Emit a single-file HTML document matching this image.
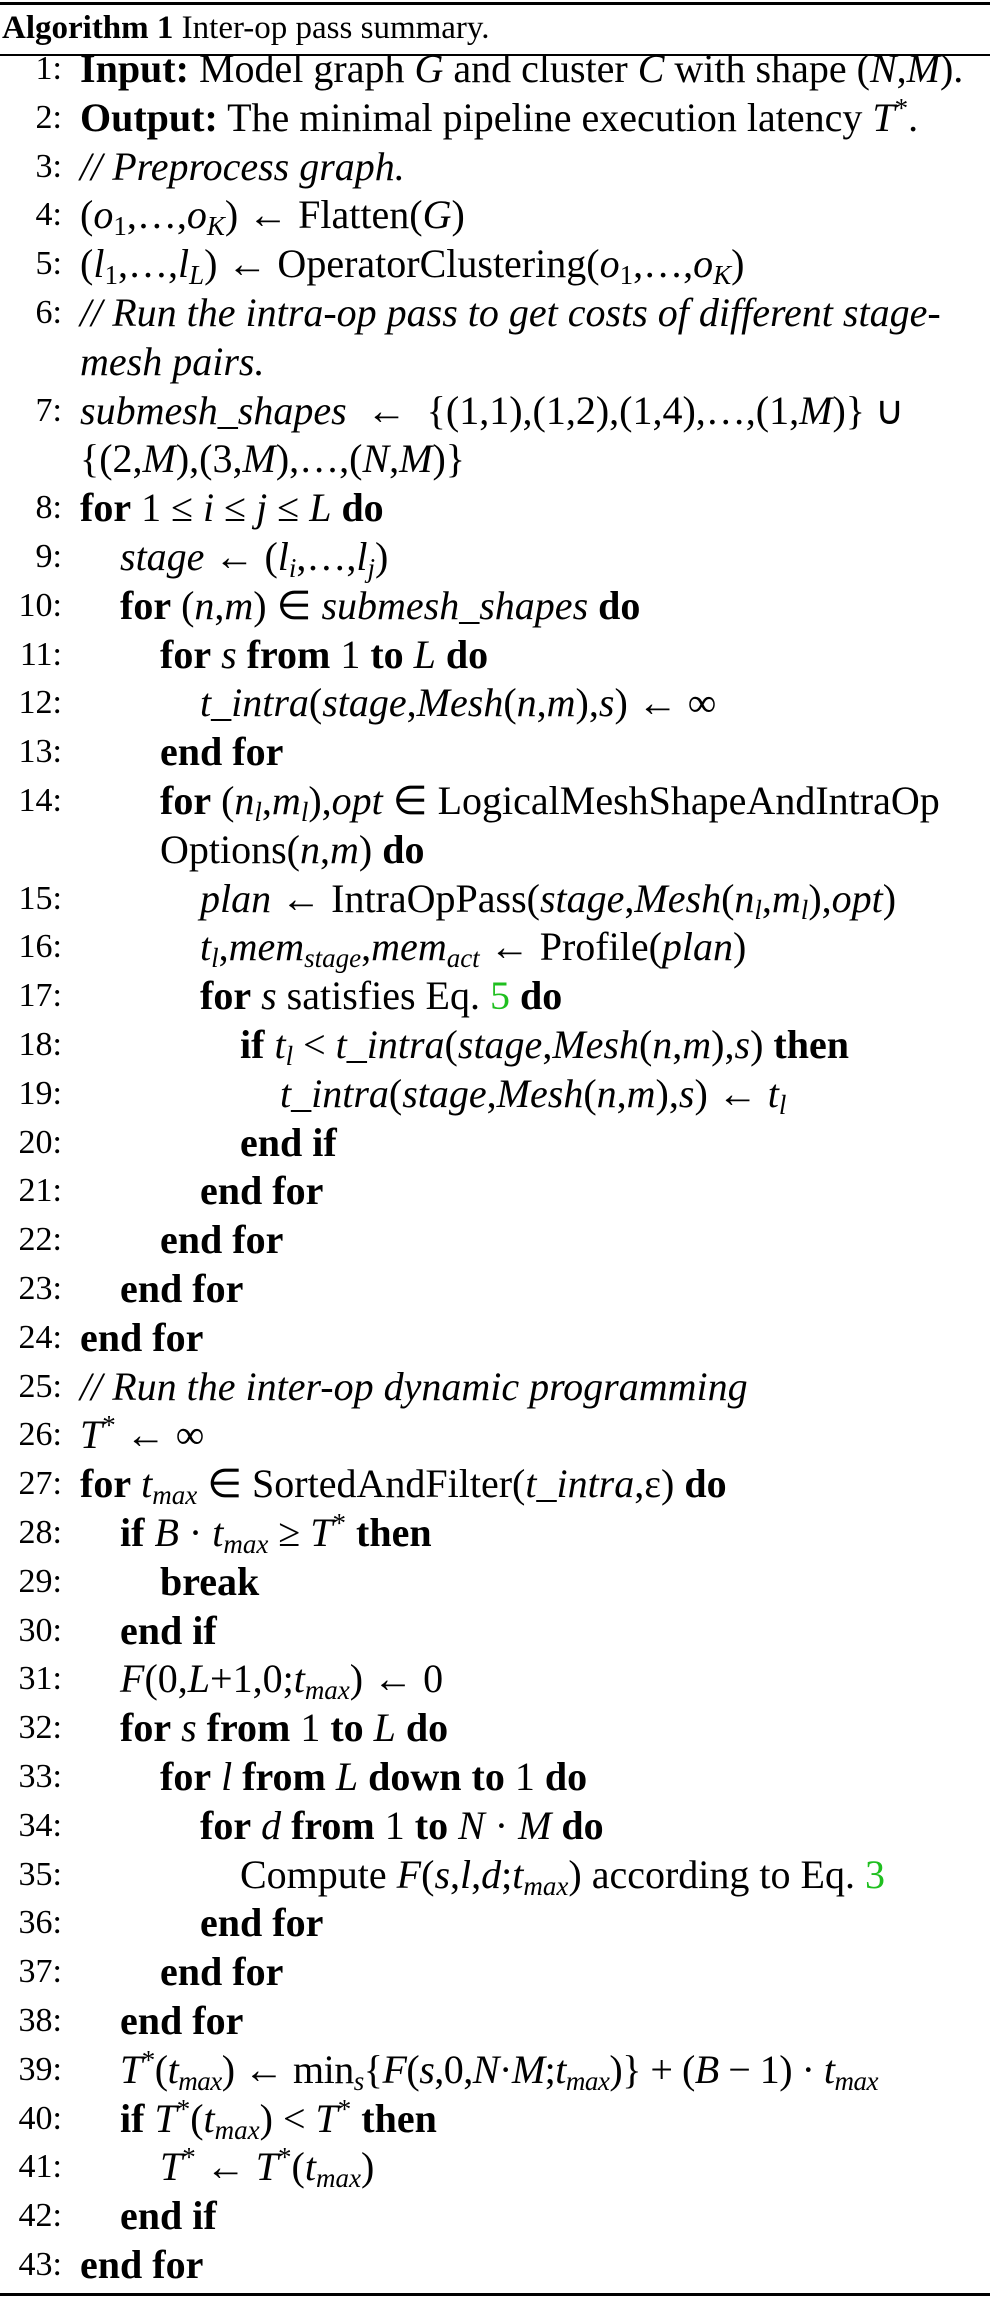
<!DOCTYPE html>
<html><head><meta charset="utf-8"><style>
html,body{margin:0;padding:0;background:#fff;}
body{width:990px;height:2312px;position:relative;overflow:hidden;font-family:"Liberation Serif",serif;color:#000;}
.rule{position:absolute;left:0;width:990px;background:#000;}
.title{position:absolute;left:2px;top:6px;font-size:33px;line-height:44px;}
.row{position:absolute;left:0;width:990px;height:49px;line-height:49px;font-size:40px;white-space:nowrap;}
.n{position:absolute;left:0;top:0;width:62px;text-align:right;font-size:34px;}
.t{position:absolute;top:0;}
.l0{left:80px}.l1{left:120px}.l2{left:160px}.l3{left:200px}.l4{left:240px}.l5{left:280px}
b{font-weight:bold}
i{font-style:italic}
sub{font-size:27px;vertical-align:-7px;line-height:0}
sup{font-size:27px;vertical-align:14px;line-height:0}
.g{color:#1fbf1f}
</style></head><body>
<div class="rule" style="top:2px;height:3px"></div>
<div class="title"><b>Algorithm 1</b> Inter-op pass summary.</div>
<div class="rule" style="top:54px;height:2px"></div>

<div class="row" style="top:44px"><span class="n">1:</span><span class="t l0"><b>Input:</b> Model graph <i>G</i> and cluster <i>C</i> with shape (<i>N</i>,<i>M</i>).</span></div>
<div class="row" style="top:92.8px"><span class="n">2:</span><span class="t l0"><b>Output:</b> The minimal pipeline execution latency <i>T</i><sup>*</sup>.</span></div>
<div class="row" style="top:141.6px"><span class="n">3:</span><span class="t l0"><i>// Preprocess graph.</i></span></div>
<div class="row" style="top:190.4px"><span class="n">4:</span><span class="t l0">(<i>o</i><sub>1</sub>,&hellip;,<i>o<sub>K</sub></i>) &larr; Flatten(<i>G</i>)</span></div>
<div class="row" style="top:239.2px"><span class="n">5:</span><span class="t l0">(<i>l</i><sub>1</sub>,&hellip;,<i>l<sub>L</sub></i>) &larr; OperatorClustering(<i>o</i><sub>1</sub>,&hellip;,<i>o<sub>K</sub></i>)</span></div>
<div class="row" style="top:288px"><span class="n">6:</span><span class="t l0"><i>// Run the intra-op pass to get costs of different stage-</i></span></div>
<div class="row" style="top:336.8px"><span class="t l0"><i>mesh pairs.</i></span></div>
<div class="row" style="top:385.6px"><span class="n">7:</span><span class="t l0"><i>submesh_shapes</i> &nbsp;&larr;&nbsp; {(1,1),(1,2),(1,4),&hellip;,(1,<i>M</i>)} &cup;</span></div>
<div class="row" style="top:434.4px"><span class="t l0">{(2,<i>M</i>),(3,<i>M</i>),&hellip;,(<i>N</i>,<i>M</i>)}</span></div>
<div class="row" style="top:483.2px"><span class="n">8:</span><span class="t l0"><b>for</b> 1 &le; <i>i</i> &le; <i>j</i> &le; <i>L</i> <b>do</b></span></div>
<div class="row" style="top:532px"><span class="n">9:</span><span class="t l1"><i>stage</i> &larr; (<i>l<sub>i</sub></i>,&hellip;,<i>l<sub>j</sub></i>)</span></div>
<div class="row" style="top:580.8px"><span class="n">10:</span><span class="t l1"><b>for</b> (<i>n</i>,<i>m</i>) &isin; <i>submesh_shapes</i> <b>do</b></span></div>
<div class="row" style="top:629.6px"><span class="n">11:</span><span class="t l2"><b>for</b> <i>s</i> <b>from</b> 1 <b>to</b> <i>L</i> <b>do</b></span></div>
<div class="row" style="top:678.4px"><span class="n">12:</span><span class="t l3"><i>t_intra</i>(<i>stage</i>,<i>Mesh</i>(<i>n</i>,<i>m</i>),<i>s</i>) &larr; &infin;</span></div>
<div class="row" style="top:727.2px"><span class="n">13:</span><span class="t l2"><b>end for</b></span></div>
<div class="row" style="top:776px"><span class="n">14:</span><span class="t l2"><b>for</b> (<i>n<sub>l</sub></i>,<i>m<sub>l</sub></i>),<i>opt</i> &isin; LogicalMeshShapeAndIntraOp</span></div>
<div class="row" style="top:824.8px"><span class="t l2">Options(<i>n</i>,<i>m</i>) <b>do</b></span></div>
<div class="row" style="top:873.6px"><span class="n">15:</span><span class="t l3"><i>plan</i> &larr; IntraOpPass(<i>stage</i>,<i>Mesh</i>(<i>n<sub>l</sub></i>,<i>m<sub>l</sub></i>),<i>opt</i>)</span></div>
<div class="row" style="top:922.4px"><span class="n">16:</span><span class="t l3"><i>t<sub>l</sub></i>,<i>mem<sub>stage</sub></i>,<i>mem<sub>act</sub></i> &larr; Profile(<i>plan</i>)</span></div>
<div class="row" style="top:971.2px"><span class="n">17:</span><span class="t l3"><b>for</b> <i>s</i> satisfies Eq. <span class="g">5</span> <b>do</b></span></div>
<div class="row" style="top:1020px"><span class="n">18:</span><span class="t l4"><b>if</b> <i>t<sub>l</sub></i> &lt; <i>t_intra</i>(<i>stage</i>,<i>Mesh</i>(<i>n</i>,<i>m</i>),<i>s</i>) <b>then</b></span></div>
<div class="row" style="top:1068.8px"><span class="n">19:</span><span class="t l5"><i>t_intra</i>(<i>stage</i>,<i>Mesh</i>(<i>n</i>,<i>m</i>),<i>s</i>) &larr; <i>t<sub>l</sub></i></span></div>
<div class="row" style="top:1117.6px"><span class="n">20:</span><span class="t l4"><b>end if</b></span></div>
<div class="row" style="top:1166.4px"><span class="n">21:</span><span class="t l3"><b>end for</b></span></div>
<div class="row" style="top:1215.2px"><span class="n">22:</span><span class="t l2"><b>end for</b></span></div>
<div class="row" style="top:1264px"><span class="n">23:</span><span class="t l1"><b>end for</b></span></div>
<div class="row" style="top:1312.8px"><span class="n">24:</span><span class="t l0"><b>end for</b></span></div>
<div class="row" style="top:1361.6px"><span class="n">25:</span><span class="t l0"><i>// Run the inter-op dynamic programming</i></span></div>
<div class="row" style="top:1410.4px"><span class="n">26:</span><span class="t l0"><i>T</i><sup>*</sup> &larr; &infin;</span></div>
<div class="row" style="top:1459.2px"><span class="n">27:</span><span class="t l0"><b>for</b> <i>t<sub>max</sub></i> &isin; SortedAndFilter(<i>t_intra</i>,&epsilon;) <b>do</b></span></div>
<div class="row" style="top:1508px"><span class="n">28:</span><span class="t l1"><b>if</b> <i>B</i> &middot; <i>t<sub>max</sub></i> &ge; <i>T</i><sup>*</sup> <b>then</b></span></div>
<div class="row" style="top:1556.8px"><span class="n">29:</span><span class="t l2"><b>break</b></span></div>
<div class="row" style="top:1605.6px"><span class="n">30:</span><span class="t l1"><b>end if</b></span></div>
<div class="row" style="top:1654.4px"><span class="n">31:</span><span class="t l1"><i>F</i>(0,<i>L</i>+1,0;<i>t<sub>max</sub></i>) &larr; 0</span></div>
<div class="row" style="top:1703.2px"><span class="n">32:</span><span class="t l1"><b>for</b> <i>s</i> <b>from</b> 1 <b>to</b> <i>L</i> <b>do</b></span></div>
<div class="row" style="top:1752px"><span class="n">33:</span><span class="t l2"><b>for</b> <i>l</i> <b>from</b> <i>L</i> <b>down to</b> 1 <b>do</b></span></div>
<div class="row" style="top:1800.8px"><span class="n">34:</span><span class="t l3"><b>for</b> <i>d</i> <b>from</b> 1 <b>to</b> <i>N</i> &middot; <i>M</i> <b>do</b></span></div>
<div class="row" style="top:1849.6px"><span class="n">35:</span><span class="t l4">Compute <i>F</i>(<i>s</i>,<i>l</i>,<i>d</i>;<i>t<sub>max</sub></i>) according to Eq. <span class="g">3</span></span></div>
<div class="row" style="top:1898.4px"><span class="n">36:</span><span class="t l3"><b>end for</b></span></div>
<div class="row" style="top:1947.2px"><span class="n">37:</span><span class="t l2"><b>end for</b></span></div>
<div class="row" style="top:1996px"><span class="n">38:</span><span class="t l1"><b>end for</b></span></div>
<div class="row" style="top:2044.8px"><span class="n">39:</span><span class="t l1" style="letter-spacing:-0.5px"><i>T</i><sup>*</sup>(<i>t<sub>max</sub></i>) &larr; min<sub><i>s</i></sub>{<i>F</i>(<i>s</i>,0,<i>N</i>&middot;<i>M</i>;<i>t<sub>max</sub></i>)} + (<i>B</i> &minus; 1) &middot; <i>t<sub>max</sub></i></span></div>
<div class="row" style="top:2093.6px"><span class="n">40:</span><span class="t l1"><b>if</b> <i>T</i><sup>*</sup>(<i>t<sub>max</sub></i>) &lt; <i>T</i><sup>*</sup> <b>then</b></span></div>
<div class="row" style="top:2142.4px"><span class="n">41:</span><span class="t l2"><i>T</i><sup>*</sup> &larr; <i>T</i><sup>*</sup>(<i>t<sub>max</sub></i>)</span></div>
<div class="row" style="top:2191.2px"><span class="n">42:</span><span class="t l1"><b>end if</b></span></div>
<div class="row" style="top:2240px"><span class="n">43:</span><span class="t l0"><b>end for</b></span></div>

<div class="rule" style="top:2293px;height:3px"></div>
</body></html>
